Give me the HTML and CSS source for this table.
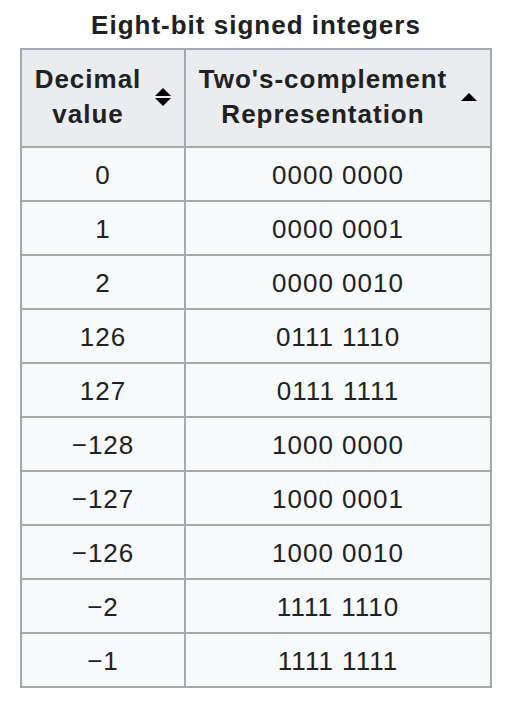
FILE: index.html
```html
<!DOCTYPE html>
<html lang="en">
<head>
<meta charset="utf-8">
<title>Eight-bit signed integers</title>
<link rel="stylesheet" href="styles.css">
</head>
<body>
<table class="wikitable">
  <caption class="cap">Eight-bit signed integers</caption>
  <colgroup><col class="c1"><col class="c2"></colgroup>
  <thead>
    <tr>
      <th>
        <div class="hdr">
          <span class="label">Decimal<br>value</span>
          <svg class="sort-both" width="16" height="18" viewBox="0 0 16 18"><polygon points="0,8 8,0 16,8"/><polygon points="0,10 16,10 8,18"/></svg>
        </div>
      </th>
      <th>
        <div class="hdr">
          <span class="label">Two's-complement<br>Representation</span>
          <svg class="sort-up" width="16" height="8" viewBox="0 0 16 8"><polygon points="0,8 8,0 16,8"/></svg>
        </div>
      </th>
    </tr>
  </thead>
  <tbody>
    <tr><td>0</td><td>0000 0000</td></tr>
    <tr><td>1</td><td>0000 0001</td></tr>
    <tr><td>2</td><td>0000 0010</td></tr>
    <tr><td>126</td><td>0111 1110</td></tr>
    <tr><td>127</td><td>0111 1111</td></tr>
    <tr><td>−128</td><td>1000 0000</td></tr>
    <tr><td>−127</td><td>1000 0001</td></tr>
    <tr><td>−126</td><td>1000 0010</td></tr>
    <tr><td>−2</td><td>1111 1110</td></tr>
    <tr><td>−1</td><td>1111 1111</td></tr>
  </tbody>
</table>
</body>
</html>
```
FILE: styles.css
```css
html, body {
  margin: 0;
  padding: 0;
  background: #ffffff;
}
body {
  font-family: "Liberation Sans", Arial, sans-serif;
  font-size: 26px;
  letter-spacing: 1px;
  color: #202122;
}
.wikitable {
  margin-left: 20px;
  border-collapse: collapse;
  table-layout: fixed;
  width: 472px;
  background: #f8f9fa;
  border: 2px solid #a2a9b1;
}
.cap {
  font-weight: bold;
  line-height: 46px;
  padding-top: 2px;
  text-align: center;
}
.c1 { width: 164px; }
.c2 { width: 306px; }
.wikitable th,
.wikitable td {
  border: 2px solid #a2a9b1;
}
.wikitable th {
  background: #eaecf0;
  font-weight: bold;
  line-height: 35px;
  padding: 12px 13px 14px 10px;
  vertical-align: middle;
}
.hdr {
  display: flex;
  align-items: center;
}
.label {
  flex: 1;
  text-align: center;
}
.hdr svg {
  flex: none;
  margin-left: 11px;
  fill: #000000;
}
.wikitable td {
  text-align: center;
  line-height: 50px;
  padding: 2px 10px 0;
}
```
